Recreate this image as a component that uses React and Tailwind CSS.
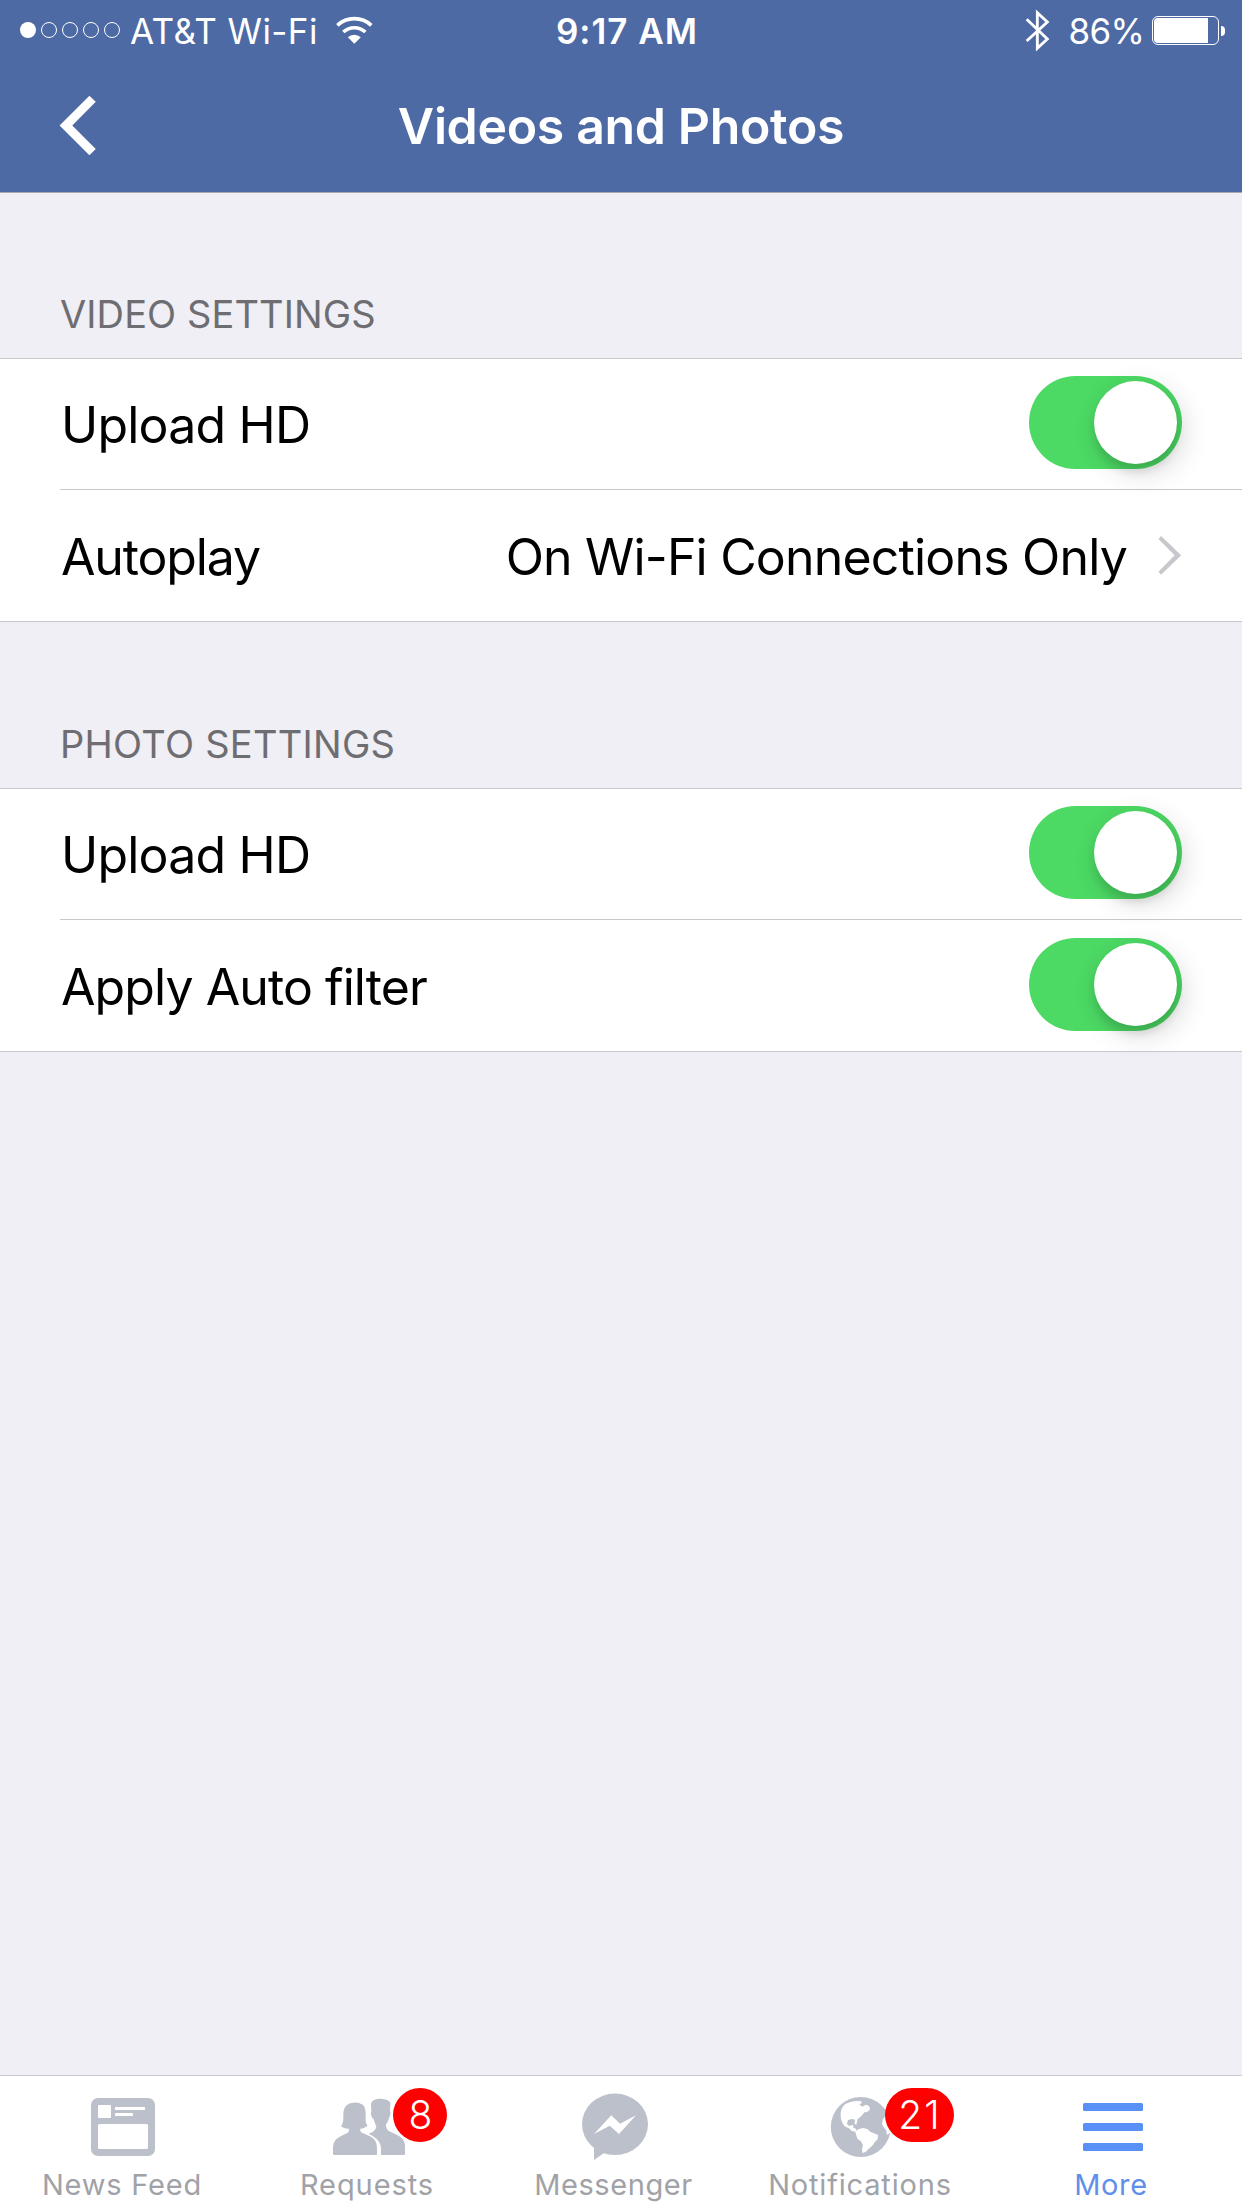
function SignalDots() {
  return (
    <div className="flex gap-[5px]">
      <span className="size-4 rounded-full bg-white" />
      {[1, 2, 3, 4].map((dot) => (
        <span key={dot} className="size-4 rounded-full border border-white" />
      ))}
    </div>
  );
}

function WifiIcon() {
  return (
    <svg viewBox="1005 40 120 96" className="h-8 w-10" fill="none" stroke="#fff" strokeWidth="11">
      <path d="M1012 74A75 75 0 0 1 1114 74" />
      <path d="M1030 94A49 49 0 0 1 1096 94" />
      <path d="M1063 129L1043.5 110A28 28 0 0 1 1082.5 110Z" fill="#fff" stroke="none" />
    </svg>
  );
}

function BluetoothIcon() {
  return (
    <svg viewBox="132 24 84 135" className="h-[45px] w-7" fill="none" stroke="#fff" strokeWidth="8.500">
      <path d="M140 58L202 117L172 145V38L202 66L140 123" />
    </svg>
  );
}

function Battery() {
  return (
    <div className="flex items-center">
      <div className="h-[29px] w-[67px] rounded-[6px] border border-white p-px">
        <div className="h-full w-[54px] rounded-l-[4px] bg-white" />
      </div>
      <span className="ml-[2px] mt-[1px] h-[10px] w-1 rounded-r-full bg-white" />
    </div>
  );
}

function StatusBar() {
  return (
    <div className="grid h-[63px] grid-cols-[556px_1fr_auto] pr-[17px] text-[35px] leading-[63px]">
      <div className="flex items-center pl-5">
        <div className="pb-[3px]">
          <SignalDots />
        </div>
        <span className="ml-[10px] w-[204.5px] tracking-[0.4px]">AT&amp;T Wi-Fi</span>
        <div className="pb-[4px]">
          <WifiIcon />
        </div>
      </div>
      <div className="font-semibold tracking-[0.98px]">9:17 AM</div>
      <div className="flex items-center">
        <div className="pb-[2px]">
          <BluetoothIcon />
        </div>
        <span className="ml-[16.5px] w-[83.5px] tracking-[-0.68px]">86%</span>
        <div className="pb-[2px]">
          <Battery />
        </div>
      </div>
    </div>
  );
}

function NavBar() {
  return (
    <header className="h-[193px] border-b border-[#a9a6b3] bg-[#4e6aa5] text-white">
      <StatusBar />
      <div className="grid h-[127px] grid-cols-[120px_1fr_120px] items-center">
        <svg viewBox="174 283 118 188" className="mb-[2px] ml-[57.5px] h-[63px] w-10" fill="#fff">
          <path d="M178 377L267 288L286 306L216 377L286 447L267 466Z" />
        </svg>
        <h1 className="text-center text-[50px] leading-[127px] font-semibold tracking-[-0.35px]">Videos and Photos</h1>
      </div>
    </header>
  );
}

function Toggle() {
  return (
    <div className="mb-[3px] flex h-[93px] w-[153px] justify-end rounded-full bg-[#4cd964] p-[5px]">
      <span className="size-[83px] rounded-full bg-white shadow-[6px_8px_28px_rgba(0,0,0,0.16),0_8px_8px_rgba(0,0,0,0.10)]" />
    </div>
  );
}

function SettingsGroup({ title, titleClass, children }) {
  return (
    <section>
      <h2 className={"h-[87px] pl-[60px] text-[38px] leading-[87px] text-[#6d6d72] " + titleClass}>{title}</h2>
      <div className="border-y border-[#c8c7cc] bg-white">{children}</div>
    </section>
  );
}

function Row({ label, labelClass, divider, children }) {
  return (
    <div className="pl-[60px]">
      <div
        className={
          "flex h-[131px] items-center justify-between pr-[60px] text-[50px] " +
          (divider ? "border-b border-[#c8c7cc]" : "")
        }
      >
        <span className={"pl-px leading-[127px] " + labelClass}>{label}</span>
        {children}
      </div>
    </div>
  );
}

function NewsFeedIcon() {
  return (
    <>
      <rect x="13" y="16" width="64" height="58" rx="7" />
      <g fill="#fff">
        <rect x="20" y="23" width="13" height="13" rx="1" />
        <rect x="37" y="25" width="30" height="3" rx="0.5" />
        <rect x="37" y="31" width="18" height="3" rx="0.5" />
        <rect x="20" y="42" width="50" height="25" rx="1.5" />
      </g>
    </>
  );
}

function RequestsIcon() {
  return (
    <g transform="scale(0.33333) translate(-132 -66)">
      <path d="M274 128C278 120 291 116 303 116.500C317 117 328 122 331 129C332 140 329 146 330 152C333 158 331 168 327 173C325 183 322 188 318 193C318 203 320 209 328 214L350 224C367 232 375 244 375 258V282Q375 285 372 285H303V264C301 243 289 233 266 221C279 217 288 210 289 199C287 194 283 188 281 178C274 173 271 160 274 153C275 145 271 138 274 128Z" />
      <path d="M183 199C191 189 190 176 190 163C190 140 203 128 222 128C229 126 240 129 246 133C256 139 257 153 257 167C257 180 256 190 263 196C258 203 248 206 241 206C239 213 243 216 250 220L268 228C285 235 291 248 291 265V282Q291 285 288 285H162Q159 285 159 282V263C160 245 168 236 182 229L200 220C206 217 208 213 207 206C198 207 190 204 183 199Z" />
    </g>
  );
}

function MessengerIcon() {
  return (
    <>
      <ellipse cx="45" cy="42.300" rx="33" ry="30.700" />
      <path d="M24 62V78L35.500 70Z" />
      <path d="M24 52L41.300 33.300L50 41.700L66 33.300L49 52L39.700 43.700Z" fill="#fff" />
    </>
  );
}

function GlobeIcon() {
  return (
    <>
      <circle cx="44.800" cy="45" r="30" />
      <g transform="scale(0.33333) translate(-198 -66)" fill="#fff">
        <path d="M285 133C297 126 314 121 334 124L335 130L328 133L336 140L346 135C354 134 361 141 360 147C358 154 350 157 343 157C338 166 331 172 323 177L319 195L313 190L316 179L306 177L294 180L291 191L297 198L310 194L309 202L319 208L320 216L305 213L299 206L284 199C276 190 272 178 272 166C271 153 276 142 285 133Z" />
        <path d="M316 216L326 207L339 204L352 207L361 215L384 225L383 238L374 247L367 257L356 266L347 276L337 279L336 268L339 255L332 243L322 236Z" />
        <path d="M410 164L399 177L396 192L402 203L408 209L411 224L430 214L424 176Z" />
      </g>
    </>
  );
}

function MenuIcon() {
  return (
    <g fill="#5890f7">
      <rect x="15" y="21" width="60" height="8" rx="1.500" />
      <rect x="15" y="41" width="60" height="8" rx="1.500" />
      <rect x="15" y="61" width="60" height="8" rx="1.500" />
    </g>
  );
}

function Tab({ label, labelClass, badge, badgeClass, children }) {
  return (
    <div className="relative flex flex-col items-center pt-[6px]">
      <svg viewBox="0 0 90 80" className="h-20 w-[90px]" fill="#bbc0ca">
        {children}
      </svg>
      <span className={"mt-[1px] text-[29px] leading-[44px] " + labelClass}>{label}</span>
      {badge && (
        <span
          className={
            "absolute top-3 flex h-[54px] items-center justify-center rounded-full bg-[#ff0000] text-[39px] leading-[54px] font-light text-white " +
            badgeClass
          }
        >
          {badge}
        </span>
      )}
    </div>
  );
}

export default function App() {
  return (
    <div className="flex h-[2208px] w-[1242px] flex-col bg-[#efeff5] font-['Inter',sans-serif]">
      <NavBar />
      <main className="flex flex-1 flex-col gap-[79px] pt-[78px]">
        <SettingsGroup title="VIDEO SETTINGS" titleClass="tracking-[0.1px]">
          <Row label="Upload HD" labelClass="pt-[2px] tracking-[-0.79px]" divider>
            <Toggle />
          </Row>
          <Row label="Autoplay" labelClass="pt-[3px] tracking-[-1.14px]">
            <div className="flex items-center gap-[31px]">
              <span className="pt-[3px] leading-[127px] tracking-[-0.82px]">On Wi-Fi Connections Only</span>
              <svg viewBox="535 585 72 118" className="mb-px h-[39px] w-6" fill="#c7c7cc">
                <path d="M544 585L605 643L544 702L536 693L585 643L536 594Z" />
              </svg>
            </div>
          </Row>
        </SettingsGroup>
        <SettingsGroup title="PHOTO SETTINGS" titleClass="tracking-[0.27px]">
          <Row label="Upload HD" labelClass="pt-[2px] tracking-[-0.79px]" divider>
            <Toggle />
          </Row>
          <Row label="Apply Auto filter" labelClass="pt-[3px] tracking-[-0.92px]">
            <Toggle />
          </Row>
        </SettingsGroup>
      </main>
      <nav className="grid h-[133px] grid-cols-[246px_246px_246px_246px_258px] border-t border-[#cbcad6] bg-white text-[#a0a2a8]">
        <Tab label="News Feed" labelClass="mr-[2px] tracking-[0.79px]">
          <NewsFeedIcon />
        </Tab>
        <Tab label="Requests" labelClass="mr-[4px] tracking-[0.93px]" badge="8" badgeClass="left-[147px] w-[54px] pl-px">
          <RequestsIcon />
        </Tab>
        <Tab label="Messenger" labelClass="mr-[3px] tracking-[0.57px]">
          <MessengerIcon />
        </Tab>
        <Tab label="Notifications" labelClass="mr-[2px] tracking-[0.82px]" badge="21" badgeClass="left-[147px] w-[69px] pl-px tracking-[2px]">
          <GlobeIcon />
        </Tab>
        <Tab label="More" labelClass="mr-[4px] tracking-[0.66px] text-[#5f8fe9]">
          <MenuIcon />
        </Tab>
      </nav>
    </div>
  );
}
